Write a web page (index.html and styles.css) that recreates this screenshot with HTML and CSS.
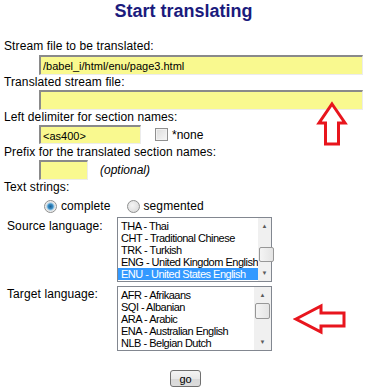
FILE: index.html
```html
<!DOCTYPE html>
<html lang="en">
<head>
  <meta charset="UTF-8">
  <title>Start translating</title>
  <link rel="stylesheet" href="styles.css">
</head>
<body>
  <div class="page">
    <h1 class="title">Start translating</h1>

    <form class="translate-form">
      <div class="label">Stream file to be translated:</div>
      <div class="field field-1"><input type="text" class="txt wide" value="/babel_i/html/enu/page3.html"></div>

      <div class="label">Translated stream file:</div>
      <div class="field field-2"><input type="text" class="txt wide" value=""></div>

      <div class="label">Left delimiter for section names:</div>
      <div class="field field-3">
        <input type="text" class="txt delim" value="&lt;as400&gt;">
        <span class="check"><span class="checkbox"></span>*none</span>
      </div>

      <div class="label">Prefix for the translated section names:</div>
      <div class="field field-4">
        <input type="text" class="txt prefix" value="">
        <em class="hint">(optional)</em>
      </div>

      <div class="label">Text strings:</div>
      <div class="radios">
        <span class="radio-opt"><span class="radio on"></span>complete</span>
        <span class="radio-opt"><span class="radio"></span>segmented</span>
      </div>

      <div class="lang-row source">
        <span class="lang-label">Source language:</span>
        <div class="listbox">
          <ul class="options">
            <li>THA - Thai</li>
            <li>CHT - Traditional Chinese</li>
            <li>TRK - Turkish</li>
            <li>ENG - United Kingdom English</li>
            <li class="selected">ENU - United States English</li>
          </ul>
          <div class="scrollbar">
            <span class="arrow">&#9650;</span>
            <span class="track"><span class="thumb thumb-low"></span></span>
            <span class="arrow">&#9660;</span>
          </div>
        </div>
      </div>

      <div class="lang-row target">
        <span class="lang-label">Target language:</span>
        <div class="listbox">
          <ul class="options">
            <li>AFR - Afrikaans</li>
            <li>SQI - Albanian</li>
            <li>ARA - Arabic</li>
            <li>ENA - Australian English</li>
            <li>NLB - Belgian Dutch</li>
          </ul>
          <div class="scrollbar">
            <span class="arrow">&#9650;</span>
            <span class="track"><span class="thumb"></span></span>
            <span class="arrow">&#9660;</span>
          </div>
        </div>
      </div>

      <div class="buttons"><button type="button" class="go">go</button></div>
    </form>

    <!-- red marks drawn over the page -->
    <svg class="mark mark-up" width="34" height="46" viewBox="0 0 34 46">
      <polygon points="17,3 30,22 23.5,22 23.5,43 10.5,43 10.5,22 4,22" fill="#fff" stroke="#e8151d" stroke-width="3" stroke-linejoin="miter"/>
    </svg>
    <svg class="mark mark-left" width="54" height="32" viewBox="0 0 54 32">
      <polygon points="3,16 28,3 28,10 51,10 51,23 28,23 28,29" fill="#fff" stroke="#e8151d" stroke-width="3" stroke-linejoin="miter"/>
    </svg>
  </div>
</body>
</html>
```

FILE: styles.css
```css
body {
    margin: 0;
    padding: 0;
    background-color: #fff;
    font-family: "Liberation Sans", Arial, sans-serif;
    font-size: 12px;
    color: #000;
}

.page {
    position: relative;
    width: 367px;
    height: 389px;
    overflow: hidden;
}

.title {
    margin: 0 0 15px 0;
    height: 24px;
    line-height: 22px;
    font-size: 18px;
    font-weight: bold;
    color: #1b1b7d;
    text-align: center;
}

.label {
    padding-left: 4px;
    height: 14px;
    line-height: 14px;
    letter-spacing: 0.1px;
    white-space: nowrap;
}

.field {
    display: flex;
    align-items: center;
    padding-left: 39px;
}

.field-1 { margin-top: 2px; }
.field-2 { margin-top: 1px; }
.field-3 { margin-top: 1px; margin-bottom: 1px; }
.field-4 { margin-top: 1px; }

.txt {
    box-sizing: border-box;
    height: 20px;
    margin: 0;
    padding: 1px 2px 0;
    border-style: solid;
    border-width: 2px 1px 1px 2px;
    border-color: #8a8a8a #ececec #ececec #8a8a8a;
    background-color: #f9f98f;
    font-family: "Liberation Sans", Arial, sans-serif;
    font-size: 11px;
    color: #000;
    outline: none;
}

.wide { width: 324px; }
.delim { width: 102px; height: 19px; }
.prefix { width: 49px; height: 20px; }

.check {
    display: flex;
    align-items: center;
    margin-left: 14px;
    font-size: 12px;
}

.checkbox {
    box-sizing: border-box;
    width: 13px;
    height: 13px;
    margin-right: 4px;
    border: 1px solid #8f8f8f;
    background: linear-gradient(135deg, #dcdcdc, #f6f6f6);
    box-shadow: inset 0 0 0 1px #f2f2f2;
}

.hint {
    margin-left: 12px;
    font-size: 12px;
}

.radios {
    display: flex;
    align-items: center;
    height: 16px;
    margin-top: 4px;
    padding-left: 44px;
    gap: 16px;
}

.radio-opt {
    display: flex;
    align-items: center;
    font-size: 12px;
    letter-spacing: 0.1px;
}

.radio {
    box-sizing: border-box;
    width: 13px;
    height: 13px;
    margin-right: 4px;
    border: 1px solid #8e8f8f;
    border-radius: 50%;
    background: radial-gradient(circle at 40% 40%, #f4f4f4, #d6d6d6);
}

.radio.on {
    background: radial-gradient(circle at 50% 50%, #1c5c8e 0, #3a8fc8 2.5px, #9cc8e4 3.5px, #e6e6e6 4.5px, #f6f6f6 6px);
}

.lang-row {
    display: flex;
    align-items: flex-start;
}

.source { margin-top: 3px; }
.target { margin-top: 4px; }

.lang-label {
    width: 110px;
    padding-left: 7px;
    line-height: 12px;
    padding-top: 3px;
    font-size: 12px;
    letter-spacing: 0.1px;
}

.target .lang-label { padding-top: 2px; }

.listbox {
    display: flex;
    box-sizing: border-box;
    width: 155px;
    height: 65px;
    border: 1px solid #828790;
    background-color: #fff;
}

.options {
    flex: 1;
    margin: 0;
    padding: 2px 0 0 0;
    list-style: none;
    font-size: 11px;
    letter-spacing: -0.5px;
    line-height: 12px;
}

.options li {
    height: 12px;
    padding-left: 3px;
    white-space: nowrap;
    overflow: hidden;
}

.options li.selected {
    background-color: #3399ff;
    color: #fff;
}

.scrollbar {
    display: flex;
    flex-direction: column;
    width: 17px;
    background-color: #f0f0f0;
}

.arrow {
    height: 16px;
    line-height: 16px;
    text-align: center;
    font-size: 6px;
    color: #5a5a5a;
}

.track {
    flex: 1;
    position: relative;
}

.thumb {
    position: absolute;
    left: 1px;
    top: 0;
    box-sizing: border-box;
    width: 15px;
    height: 16px;
    border: 1px solid #979797;
    border-radius: 2px;
    background: linear-gradient(90deg, #f4f4f4, #e4e4e4);
}

.thumb-low { top: 13px; height: 15px; }

.buttons {
    margin-top: 19px;
    padding-left: 170px;
}

.go {
    box-sizing: border-box;
    width: 31px;
    height: 17px;
    padding: 0;
    border: 1px solid #707070;
    border-radius: 3px;
    background: linear-gradient(#f3f3f3, #e9e9e9 50%, #d8d8d8 51%, #dcdcdc);
    font-family: "Liberation Sans", Arial, sans-serif;
    font-size: 11px;
    color: #000;
}

.mark {
    position: absolute;
}

.mark-up { left: 315px; top: 101px; }
.mark-left { left: 293px; top: 303px; }
```
